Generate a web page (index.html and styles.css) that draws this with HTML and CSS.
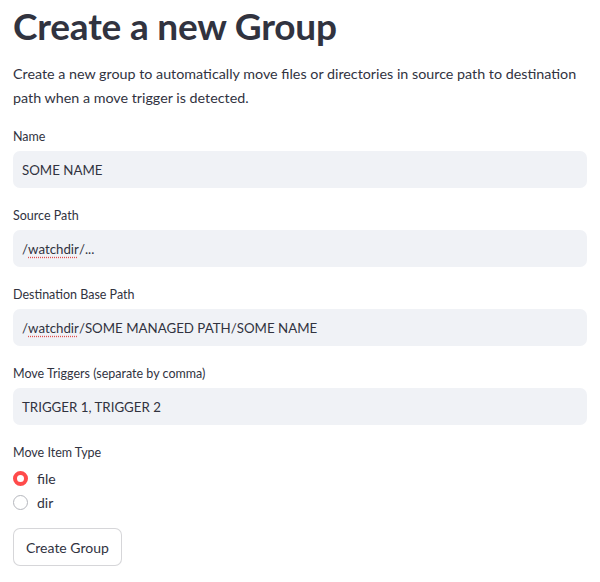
FILE: index.html
```html
<!DOCTYPE html>
<html>
<head>
<meta charset="utf-8">
<link rel="stylesheet" href="styles.css">
</head>
<body>
<main class="page">
  <h1 class="title">Create a new Group</h1>
  <p class="intro">Create a new group to automatically move files or directories in source path to destination path when a move trigger is detected.</p>

  <div class="field">
    <div class="label">Name</div>
    <div class="input">SOME NAME</div>
  </div>
  <div class="field">
    <div class="label">Source Path</div>
    <div class="input">/<span class="spell">watchdir</span>/...</div>
  </div>
  <div class="field">
    <div class="label">Destination Base Path</div>
    <div class="input">/<span class="spell">watchdir</span>/SOME MANAGED PATH/SOME NAME</div>
  </div>
  <div class="field">
    <div class="label">Move Triggers (separate by comma)</div>
    <div class="input">TRIGGER 1, TRIGGER 2</div>
  </div>

  <div class="field radios">
    <div class="label">Move Item Type</div>
    <div class="radio"><span class="dot checked"></span>file</div>
    <div class="radio"><span class="dot"></span>dir</div>
  </div>

  <div class="actions">
    <button class="btn">Create Group</button>
  </div>
</main>
</body>
</html>
```

FILE: styles.css
```css
* { box-sizing: border-box; }
html, body { margin: 0; padding: 0; background: #ffffff; }
body {
  font-family: "Lato", "Open Sans", sans-serif;
  color: #31333f;
}
.page {
  padding: 0 13px;
  display: flex;
  flex-direction: column;
}
.title {
  margin: 0;
  padding-top: 4px;
  font-size: 37px;
  font-weight: 700;
  line-height: 44px;
  letter-spacing: -0.2px;
}
.intro {
  margin: 14px 0 0;
  font-size: 14.3px;
  line-height: 24px;
}
.field {
  display: flex;
  flex-direction: column;
  margin-top: 19px;
}
.field + .field { margin-top: 20px; }
.label {
  font-size: 12.5px;
  line-height: 16px;
  height: 16px;
  margin-bottom: 6px;
}
.input {
  height: 37px;
  background: #f0f2f6;
  border-radius: 7px;
  padding: 0 9px;
  display: flex;
  align-items: center;
  font-size: 13.3px;
  white-space: pre;
}
.spell {
  text-decoration: underline dotted #e05050;
  text-underline-offset: 3px;
}
.radios .label { margin-bottom: 6px; }
.radio {
  display: flex;
  align-items: center;
  height: 23.5px;
  font-size: 14px;
}
.dot {
  width: 15px;
  height: 15px;
  border-radius: 50%;
  border: 1px solid #b5b7bd;
  margin-right: 9px;
  background: #fff;
}
.dot.checked {
  border: 4.5px solid #ff4b4b;
  background: #fff;
}
.actions { margin-top: 14px; }
.btn {
  font-family: inherit;
  font-size: 14px;
  color: #31333f;
  background: #fff;
  border: 1px solid rgba(49, 51, 63, 0.2);
  border-radius: 7px;
  height: 38px;
  padding: 0 12px;
}
```
